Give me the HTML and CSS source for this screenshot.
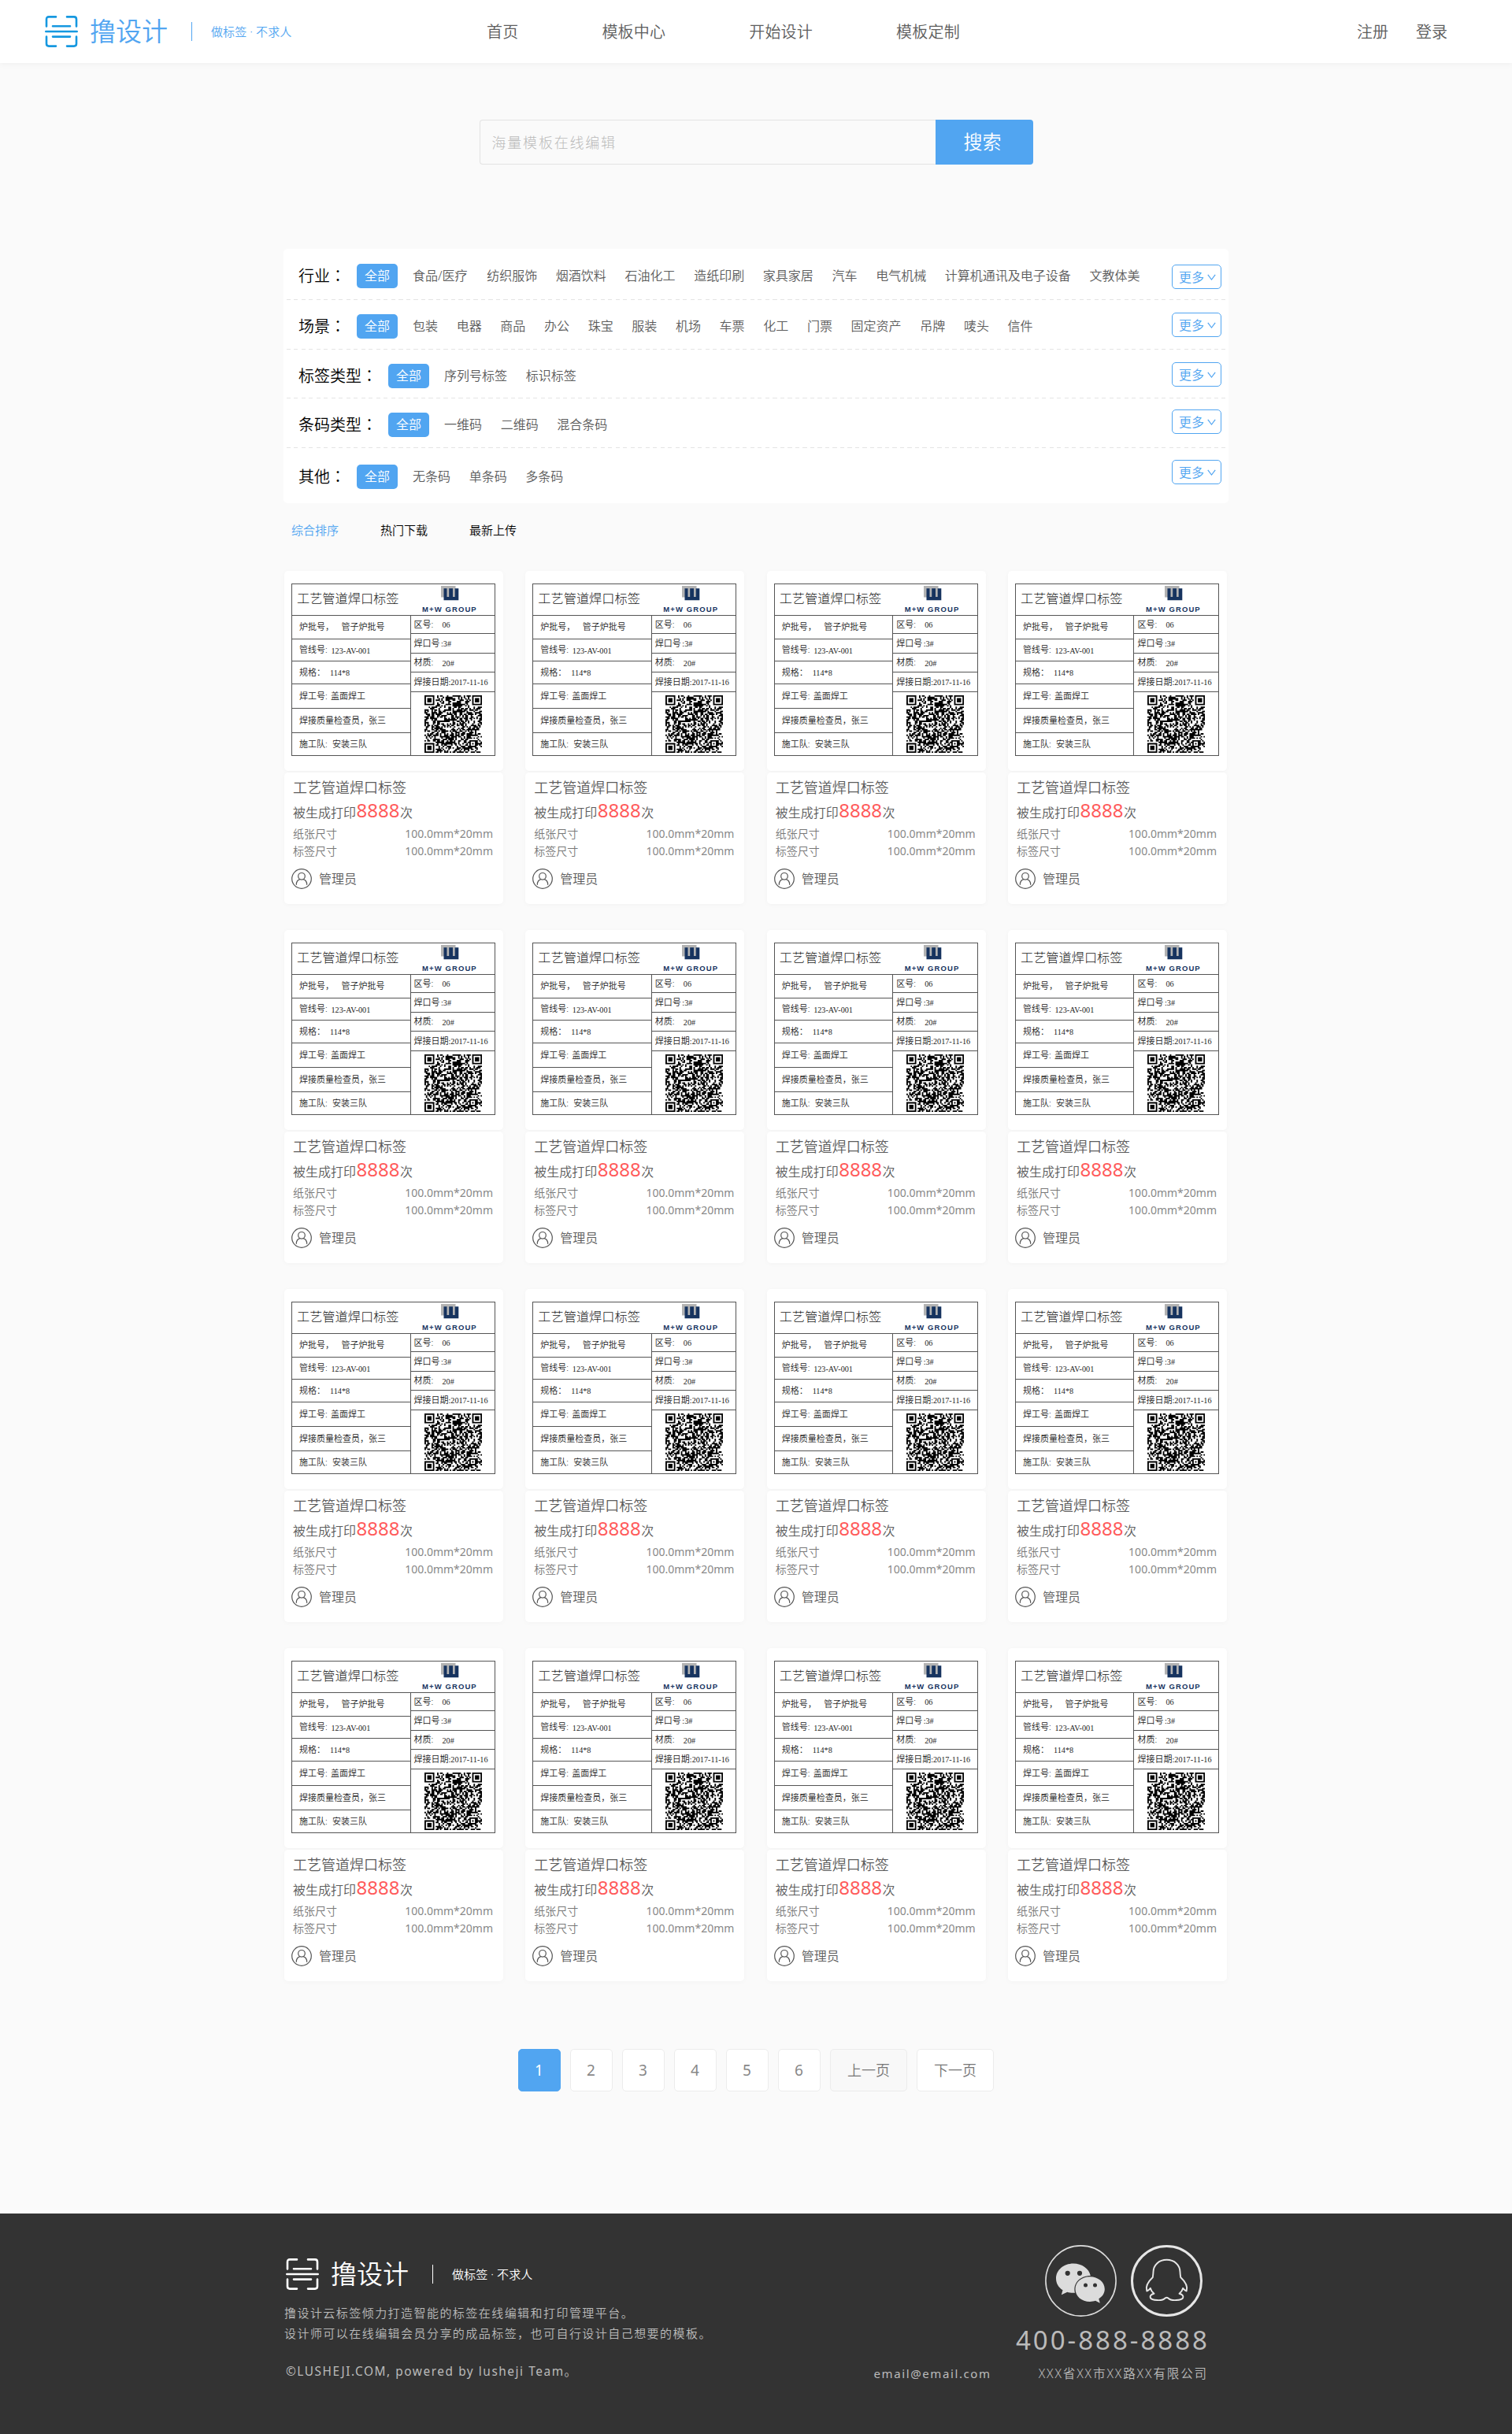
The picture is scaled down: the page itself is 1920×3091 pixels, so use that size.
FILE: index.html
```html
<!DOCTYPE html>
<html lang="zh-CN">
<head>
<meta charset="utf-8">
<title>撸设计 - 模板中心</title>
<link rel="stylesheet" href="styles.css">
</head>
<body>
<svg class="defs" aria-hidden="true">
  <symbol id="logo" viewBox="0 0 42 40">
    <g fill="none" stroke="currentColor" stroke-width="2.6" stroke-linecap="round">
      <path d="M2 13.500V4.500Q2 1.400 5 1.400H14M28 1.400H37Q40 1.400 40 4.500V13.500M2 26.500V35.500Q2 38.600 5 38.600H14M28 38.600H37Q40 38.600 40 35.500V26.500M10 13.200H32M1.300 20H40.700M10 26.600H32"/>
    </g>
  </symbol>
  <symbol id="user" viewBox="0 0 26 26">
    <g fill="none" stroke="#555" stroke-width="1.200">
      <circle cx="13" cy="13" r="12.300"/>
      <circle cx="13" cy="9.800" r="4.300"/>
      <path d="M6.300 20.300C6.300 16.500 8.500 14.300 11 13.600M15 13.600C17.500 14.300 19.700 16.500 19.700 20.300" stroke-linecap="round"/>
    </g>
  </symbol>
  <symbol id="mw" viewBox="0 0 23 19">
    <path fill="#b3b3b3" d="M0 0H18.500V14.500H0Z"/>
    <path fill="#16335f" d="M3.500 3.300H7.500V14H10.200V3.300H15V14H17.700V3.300H22.300V18.300H3.500Z"/>
  </symbol>
  <symbol id="qr" viewBox="0 0 41 41"><path id="qr-path" fill="#000"/></symbol>
</svg>

<header class="header">
  <div class="brand">
    <svg class="brand-mark"><use href="#logo"/></svg>
    <span class="brand-name">撸设计</span>
    <i class="brand-line"></i>
    <span class="brand-slogan">做标签 · 不求人</span>
  </div>
  <nav class="nav"><a>首页</a><a>模板中心</a><a>开始设计</a><a>模板定制</a></nav>
  <div class="account"><a>注册</a><a>登录</a></div>
</header>

<main class="main">
  <div class="search">
    <div class="search-field">海量模板在线编辑</div>
    <div class="search-btn">搜索</div>
  </div>

  <section class="filters">
    <div class="filter">
      <span class="filter-name">行业<i class="mark" lang="zh-TW">：</i></span><span class="pill">全部</span>
      <div class="options"><a>食品/医疗</a><a>纺织服饰</a><a>烟酒饮料</a><a>石油化工</a><a>造纸印刷</a><a>家具家居</a><a>汽车</a><a>电气机械</a><a>计算机通讯及电子设备</a><a>文教体美</a></div>
      <span class="more">更多<svg viewBox="0 0 11 8"><path d="M.8.800 5.500 7 10.200.800"/></svg></span>
    </div>
    <div class="filter">
      <span class="filter-name">场景<i class="mark" lang="zh-TW">：</i></span><span class="pill">全部</span>
      <div class="options"><a>包装</a><a>电器</a><a>商品</a><a>办公</a><a>珠宝</a><a>服装</a><a>机场</a><a>车票</a><a>化工</a><a>门票</a><a>固定资产</a><a>吊牌</a><a>唛头</a><a>信件</a></div>
      <span class="more">更多<svg viewBox="0 0 11 8"><path d="M.8.800 5.500 7 10.200.800"/></svg></span>
    </div>
    <div class="filter">
      <span class="filter-name">标签类型<i class="mark" lang="zh-TW">：</i></span><span class="pill">全部</span>
      <div class="options"><a>序列号标签</a><a>标识标签</a></div>
      <span class="more">更多<svg viewBox="0 0 11 8"><path d="M.8.800 5.500 7 10.200.800"/></svg></span>
    </div>
    <div class="filter">
      <span class="filter-name">条码类型<i class="mark" lang="zh-TW">：</i></span><span class="pill">全部</span>
      <div class="options"><a>一维码</a><a>二维码</a><a>混合条码</a></div>
      <span class="more">更多<svg viewBox="0 0 11 8"><path d="M.8.800 5.500 7 10.200.800"/></svg></span>
    </div>
    <div class="filter">
      <span class="filter-name">其他<i class="mark" lang="zh-TW">：</i></span><span class="pill">全部</span>
      <div class="options"><a>无条码</a><a>单条码</a><a>多条码</a></div>
      <span class="more">更多<svg viewBox="0 0 11 8"><path d="M.8.800 5.500 7 10.200.800"/></svg></span>
    </div>
  </section>

  <div class="sort"><a class="active">综合排序</a><a>热门下载</a><a>最新上传</a></div>

  <section class="cards" id="cards"></section>

  <div class="pager">
    <a class="page current">1</a><a class="page">2</a><a class="page">3</a><a class="page">4</a><a class="page">5</a><a class="page">6</a><a class="page wide off">上一页</a><a class="page wide">下一页</a>
  </div>
</main>

<footer class="footer">
  <div class="footer-inner">
    <div class="about">
      <div class="brand brand-light">
        <svg class="brand-mark"><use href="#logo"/></svg>
        <span class="brand-name">撸设计</span>
        <i class="brand-line"></i>
        <span class="brand-slogan">做标签 · 不求人</span>
      </div>
      <p class="desc">撸设计云标签倾力打造智能的标签在线编辑和打印管理平台。<br>设计师可以在线编辑会员分享的成品标签，也可自行设计自己想要的模板。</p>
      <p class="copy">©LUSHEJI.COM, powered by lusheji Team。</p>
    </div>
    <div class="contact">
      <div class="social">
        <svg viewBox="0 0 91 91">
          <circle cx="45.500" cy="45.500" r="44.600" fill="none" stroke="#dcdcdc" stroke-width="1.600"/>
          <path fill="#dcdcdc" d="M36 23.500C23.500 23.500 14 32 14 42.500C14 48.500 17 53.800 22.500 57.300L20.800 63.300L28.300 59.800C31 60.600 34.500 61 38 60.700C35 49 44 39 57.800 39C56 30 47 23.500 36 23.500Z"/>
          <path fill="#dcdcdc" d="M57 40.200C46.500 40.200 38.500 47 38.500 56C38.500 65 46.500 72 57 72C59.500 72 62 71.500 64 70.800L69.800 73.800L68.300 68.300C73 65.300 75.800 61 75.800 56C75.800 47 67.500 40.200 57 40.200Z"/>
          <g fill="#333"><circle cx="28.700" cy="35.800" r="3.100"/><circle cx="44" cy="35.800" r="3.100"/><circle cx="51.500" cy="51" r="2.500"/><circle cx="63.500" cy="51" r="2.500"/></g>
        </svg>
        <svg viewBox="0 0 91 91">
          <circle cx="45.500" cy="45.500" r="44" fill="none" stroke="#e6e6e6" stroke-width="3"/>
          <path fill="none" stroke="#e6e6e6" stroke-width="1.900" stroke-linejoin="round" d="M45.500 18.800C35.500 18.800 28.800 25.500 28.500 34C28.400 37 28.200 38.500 27.800 41C23 45.500 18 52 20.300 58.500C22.500 58 23.700 56.500 24.800 54.800C25.500 57.500 27 60 29.500 61.800C26 62.500 23.800 64.500 24.800 67C26.500 70.500 40 71.500 43.500 67.500Q45.500 66 47.500 67.500C51 71.500 64.500 70.500 66.200 67C67.200 64.500 65 62.500 61.500 61.800C64 60 65.500 57.500 66.200 54.800C67.300 56.500 68.500 58 70.700 58.500C73 52 68 45.500 63.200 41C62.800 38.500 62.600 37 62.500 34C62.200 25.500 55.500 18.800 45.500 18.800Z"/>
        </svg>
      </div>
      <div class="phone">400-888-8888</div>
      <div class="address"><span class="mail">email@email.com</span><span class="place">XXX省XX市XX路XX有限公司</span></div>
    </div>
  </div>
</footer>

<template id="card">
  <article class="card">
    <div class="preview">
      <div class="label">
        <div class="label-head">
          <span class="label-title">工艺管道焊口标签</span>
          <div class="label-logo"><svg><use href="#mw"/></svg><span>M+W GROUP</span></div>
        </div>
        <div class="label-body">
          <div class="col left">
            <div><b>炉批号，</b>管子炉批号</div>
            <div><b>管线号:</b><em>123-AV-001</em></div>
            <div><b>规格：</b><em>114*8</em></div>
            <div><b>焊工号:</b>盖面焊工</div>
            <div><b>焊接质量检查员，张三</b></div>
            <div><b>施工队:</b>安装三队</div>
          </div>
          <div class="col right">
            <div><b>区号:</b><em>06</em></div>
            <div><b>焊口号</b><em>:3#</em></div>
            <div><b>材质:</b><em>20#</em></div>
            <div><b>焊接日期</b><em>:2017-11-16</em></div>
            <div class="code"><svg><use href="#qr"/></svg></div>
          </div>
        </div>
      </div>
    </div>
    <div class="info">
      <h3>工艺管道焊口标签</h3>
      <p class="count">被生成打印<strong>8888</strong>次</p>
      <p class="size"><span>纸张尺寸</span><span class="num">100.0mm*20mm</span></p>
      <p class="size"><span>标签尺寸</span><span class="num">100.0mm*20mm</span></p>
      <p class="author"><svg><use href="#user"/></svg>管理员</p>
    </div>
  </article>
</template>
<script src="script.js"></script>
</body>
</html>
```
FILE: styles.css
```css
* { box-sizing: border-box; margin: 0; padding: 0; }

body {
  background: #fafafa;
  color: #5c5c5c;
  font-family: "Noto Sans", "Noto Sans CJK SC", sans-serif;
  font-weight: 350;
  font-size: 16px;
  line-height: 1;
}

.defs { display: none; }
.mark { font-family: "Noto Sans CJK TC", sans-serif; font-style: normal; }

/* header */
.header {
  display: flex;
  align-items: center;
  height: 80px;
  padding: 0 81px 0 57px;
  background: #fff;
  box-shadow: 0 1px 8px rgba(0, 0, 0, .05);
  font-size: 20px;
}
.brand { display: flex; align-items: center; color: #51a5f1; }
.brand-mark { width: 42px; height: 40px; color: #1698e0; }
.brand-name { margin-left: 15px; width: 100px; font-size: 33px; white-space: nowrap; line-height: 42px; }
.brand-line { width: 1px; height: 24px; margin-left: 29px; background: currentColor; }
.brand-slogan { margin-left: 24px; width: 104px; font-size: 15px; letter-spacing: .1px; white-space: nowrap; }
.nav { display: flex; gap: 106px; margin-left: 246px; letter-spacing: .2px; padding-top: 1px; }
.account { display: flex; gap: 35px; margin-left: auto; padding: 1px 1px 0 0; }

.main { width: 1200px; margin: 0 auto; height: 2731px; padding-top: 72px; }

/* search */
.search { display: flex; width: 703px; height: 57px; margin: 0 auto; }
.search-field {
  flex: 1;
  padding: 0 15px;
  border: 1px solid #e3e3e3;
  border-right: 0;
  border-radius: 4px 0 0 4px;
  color: #bbb;
  font-size: 18px;
  font-weight: 300;
  letter-spacing: 1.8px;
  line-height: 56px;
}
.search-btn {
  width: 124px;
  padding-right: 4px;
  border-radius: 0 4px 4px 0;
  background: #51a5f1;
  color: #fff;
  font-size: 24px;
  line-height: 56px;
  text-align: center;
}

/* filters */
.filters {
  height: 323px;
  margin-top: 107px;
  padding: 0 4px;
  border-radius: 5px;
  background: #fff;
}
.filter { display: flex; align-items: flex-start; height: 63px; padding: 18px 5px 0 15px; }
.filter:not(:last-child) {
  background: repeating-linear-gradient(90deg, #e4e4e4 0 5px, transparent 5px 9.500px) bottom / 100% 1px no-repeat;
}
.filter:nth-child(1) { height: 65px; padding-top: 19px; }
.filter:nth-child(3) { height: 62px; }
.filter:last-child { padding-top: 21px; }
.filter-name { margin-right: 14px; color: #000; font-size: 20px; line-height: 29px; }
.pill {
  width: 52px;
  height: 31px;
  border-radius: 5px;
  background: #51a5f1;
  color: #fff;
  line-height: 31px;
  text-align: center;
}
.options { display: flex; gap: 23.650px; margin-left: 19px; line-height: 31px; }
.filter:nth-child(1) .options a:first-child { margin-right: 1px; }
.more {
  display: flex;
  align-items: center;
  gap: 4px;
  width: 63px;
  height: 31px;
  margin: -2px 0 0 auto;
  padding-left: 8px;
  border: 1px solid #51a5f1;
  border-radius: 5px;
  color: #51a5f1;
}
.filter:nth-child(1) .more { margin-top: 1px; }
.filter:nth-child(4) .more { margin-top: -4px; }
.filter:last-child .more { margin-top: -6px; }
.more svg { width: 11px; height: 8px; margin-top: 1px; fill: none; stroke: currentColor; stroke-width: 1.200; }

.sort { display: flex; gap: 53px; margin: 25px 0 0 10px; color: #000; font-size: 15px; line-height: 18px; }
.sort .active { color: #51a5f1; }

/* cards */
.cards {
  display: grid;
  grid-template-columns: repeat(4, 278px);
  gap: 33px 28.330px;
  margin: 43px 0 0 1px;
}
.preview, .info { border-radius: 5px; background: #fff; box-shadow: 0 1px 6px rgba(0, 0, 0, .03); }
.preview { height: 254px; padding: 16px 9px 0; }
.info { height: 167px; margin-top: 2px; padding: 9px 13px 0 11px; }

.label {
  width: 259px;
  height: 219px;
  border: 1px solid #555;
  color: #222;
  font-size: 11px;
}
.label-head { display: flex; justify-content: space-between; height: 40px; border-bottom: 1px solid #555; }
.label-title { padding-left: 6px; font-size: 16.200px; font-weight: 300; line-height: 37px; }
.label-logo { display: flex; flex-direction: column; align-items: flex-start; width: 92px; padding-top: 2px; }
.label-logo svg { width: 23px; height: 19px; margin-left: 24px; }
.label-logo span {
  margin-top: 6px;
  color: #16335f;
  font-family: "Liberation Sans", sans-serif;
  font-size: 9.500px;
  font-weight: 700;
  letter-spacing: 1.100px;
  white-space: nowrap;
}
.label-body { display: grid; grid-template-columns: 150.500px 1fr; height: 177px; }
.col { display: grid; }
.col > div { display: flex; align-items: center; padding-bottom: 2px; white-space: nowrap; }
.col > div:not(:last-child) { border-bottom: 1px solid #555; }
.col b { font-weight: inherit; }
.col em { padding-top: 3px; font: 10.200px "Liberation Serif", serif; }
.left { grid-template-rows: 30px 28px 29px 31px 31px 28px; border-right: 1px solid #555; }
.left > div { padding-left: 9px; }
.left > div:nth-child(1) b { width: 53.500px; }
.left > div:nth-child(2) b { width: 40.500px; }
.left > div:nth-child(3) b { width: 39px; }
.left > div:nth-child(4) b { width: 40px; }
.left > div:nth-child(6) b { width: 42px; }
.right { grid-template-rows: 23px 25px 24px 25px 80px; }
.right > div { padding-left: 4px; }
.right > div:nth-child(odd) b { width: 36px; }
.right > div:nth-child(2) b { width: 34.500px; }
.right .code { align-items: flex-start; padding: 4px 0 0 17px; }
.code svg { width: 73px; height: 73px; }

.info h3 { font-size: 18px; font-weight: inherit; line-height: 20px; }
.count { display: flex; align-items: baseline; height: 28px; margin-top: 6px; line-height: 26px; }
.count strong { margin: 0 .500px; color: #ff5b5b; font-size: 24px; font-weight: 400; }
.size { display: flex; justify-content: space-between; color: #777; font-size: 14px; line-height: 22px; }
.size:nth-of-type(2) { margin-top: 4px; }
.size .num { color: #888; font-weight: 400; }
.author { display: flex; align-items: center; gap: 9px; margin: 11px 0 0 -2px; }
.author svg { width: 26px; height: 26px; }

/* pagination */
.pager { display: flex; gap: 12px; margin: 86px 0 0 298px; }
.page {
  width: 54px;
  height: 54px;
  padding-right: 1px;
  border: 1px solid #ececec;
  border-radius: 5px;
  background: #fff;
  color: #888;
  font-size: 19px;
  font-weight: 400;
  line-height: 53px;
  text-align: center;
}
.page.current { border-color: #51a5f1; background: #51a5f1; color: #fff; }
.page.wide { width: 98px; padding-right: 0; color: #777; font-size: 18px; font-weight: 350; }
.page.off { background: #f8f8f8; }

/* footer */
.footer { height: 280px; background: #333; color: #bbb; }
.footer-inner { display: flex; justify-content: space-between; width: 1200px; margin: 0 auto; padding: 40px 28px 0 1px; }
.about { padding-top: 16px; }
.brand-light { margin-left: 2px; color: #fff; }
.brand-light .brand-mark { color: #fff; }
.desc { margin-top: 15px; font-size: 15px; letter-spacing: 1.450px; line-height: 26px; }
.copy { margin: 23px 0 0 2px; font-size: 15.400px; font-weight: 400; letter-spacing: 1.550px; line-height: 26px; }
.contact { display: flex; flex-direction: column; align-items: flex-end; }
.social { display: flex; gap: 18px; margin-right: 5px; }
.social svg { width: 91px; height: 91px; }
.phone { margin: 11px -4px 0 0; font-size: 33px; font-weight: 400; letter-spacing: 3px; line-height: 38px; }
.address { display: flex; gap: 60px; margin: 10px -2px 0 0; font-size: 15px; line-height: 26px; }
.mail { font-weight: 400; letter-spacing: 1.600px; }
.place { font-size: 15.500px; letter-spacing: 1.900px; }
```
FILE: script.js
```js
// Fills the QR symbol: three finders, one alignment mark, pseudo-random data.
const N = 41;
const ring = (x, y, cx, cy) => Math.max(Math.abs(x - cx), Math.abs(y - cy));
let seed = 20171116;
const rand = () => {
  seed = (seed * 1103515245 + 12345) % 2147483648;
  return seed / 2147483648;
};
let d = '';
for (let y = 0; y < N; y++) {
  for (let x = 0; x < N; x++) {
    let on = rand() < 0.52;
    for (const [cx, cy] of [[3, 3], [N - 4, 3], [3, N - 4]]) {
      const r = ring(x, y, cx, cy);
      if (r <= 4) on = r === 3 || r <= 1;
    }
    const a = ring(x, y, N - 7, N - 7);
    if (a <= 2) on = a !== 1;
    if (on) d += `M${x} ${y}h1.05v1.05h-1.05z`;
  }
}
document.getElementById('qr-path').setAttribute('d', d);

const list = document.getElementById('cards');
const card = document.getElementById('card');
for (let i = 0; i < 16; i++) list.appendChild(card.content.cloneNode(true));
```
